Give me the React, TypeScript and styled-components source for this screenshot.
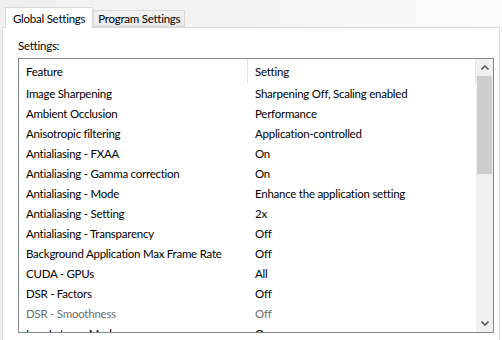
import React from "react";
import styled, { createGlobalStyle } from "styled-components";

const Global = createGlobalStyle`
  html, body { margin: 0; padding: 0; background: #ffffff; }
  body {
    font-family: "Segoe UI", Lato, "Noto Sans", sans-serif;
    font-size: 11.5px;
    letter-spacing: -0.25px;
    color: #000;
  }
  * { box-sizing: border-box; }
`;

const Window = styled.div`
  width: 502px;
  height: 340px;
  overflow: hidden;
  padding: 0 2px;
  background: linear-gradient(to right, #f0f0f0 0%, #f3f3f3 50%, #fcfcfc 100%);
`;

const TabStrip = styled.div`
  display: flex;
  align-items: flex-end;
  height: 27px;
  padding-left: 3px;
`;

const Tab = styled.div<{ $active?: boolean }>`
  position: relative;
  z-index: ${(p) => (p.$active ? 1 : 0)};
  height: ${(p) => (p.$active ? "21px" : "17px")};
  margin-bottom: ${(p) => (p.$active ? "-1px" : "0")};
  padding: ${(p) => (p.$active ? "0 7px" : "0 4px")};
  border: 1px solid #d9d9d9;
  border-bottom: ${(p) => (p.$active ? "none" : "1px solid #d9d9d9")};
  background: ${(p) => (p.$active ? "#ffffff" : "linear-gradient(#f2f2f2, #ebebeb)")};
  display: flex;
  align-items: center;
  line-height: 15px;
  white-space: nowrap;
`;

const Panel = styled.div`
  background: #ffffff;
  border: 1px solid #d9d9d9;
  height: 330px;
  padding: 10px 0 0 15px;
`;

const Label = styled.div`
  line-height: 15px;
  height: 15px;
  margin-bottom: 5px;
`;

const ListBox = styled.div`
  width: 476px;
  height: 275px;
  border: 1px solid #828790;
  display: flex;
  background: #ffffff;
`;

const ListMain = styled.div`
  flex: 1;
  overflow: hidden;
  display: flex;
  flex-direction: column;
`;

const Header = styled.div`
  display: grid;
  grid-template-columns: 229px 228px;
  height: 24px;
  flex: none;
`;

const HeaderCell = styled.div`
  display: flex;
  align-items: center;
  padding-left: 7px;
  border-right: 1px solid #e5e5e5;
  line-height: 15px;
`;

const Row = styled.div<{ $disabled?: boolean }>`
  display: grid;
  grid-template-columns: 229px 228px;
  height: 20px;
  flex: none;
  color: ${(p) => (p.$disabled ? "#6d6d6d" : "#000000")};
`;

const Cell = styled.div`
  display: flex;
  align-items: center;
  padding-left: 7px;
  white-space: nowrap;
  line-height: 15px;
`;

const ScrollBar = styled.div`
  width: 17px;
  flex: none;
  background: #f0f0f0;
  display: flex;
  flex-direction: column;
`;

const ArrowButton = styled.div`
  height: 17px;
  flex: none;
  display: flex;
  align-items: center;
  justify-content: center;
`;

const Thumb = styled.div`
  height: 98px;
  margin: 0 1px;
  background: #cdcdcd;
  flex: none;
`;

const Track = styled.div`
  flex: 1;
`;

const rows: { f: string; s: string; d?: boolean }[] = [
  { f: "Image Sharpening", s: "Sharpening Off, Scaling enabled" },
  { f: "Ambient Occlusion", s: "Performance" },
  { f: "Anisotropic filtering", s: "Application-controlled" },
  { f: "Antialiasing - FXAA", s: "On" },
  { f: "Antialiasing - Gamma correction", s: "On" },
  { f: "Antialiasing - Mode", s: "Enhance the application setting" },
  { f: "Antialiasing - Setting", s: "2x" },
  { f: "Antialiasing - Transparency", s: "Off" },
  { f: "Background Application Max Frame Rate", s: "Off" },
  { f: "CUDA - GPUs", s: "All" },
  { f: "DSR - Factors", s: "Off" },
  { f: "DSR - Smoothness", s: "Off", d: true },
  { f: "Low Latency Mode", s: "On" },
];

const Chevron = ({ up }: { up?: boolean }) => (
  <svg width="8" height="5" viewBox="0 0 8 5">
    <path
      d={up ? "M0.5 4.5 L4 1 L7.5 4.5" : "M0.5 0.5 L4 4 L7.5 0.5"}
      fill="none"
      stroke="#606060"
      strokeWidth="1.6"
    />
  </svg>
);

export default function App() {
  return (
    <>
      <Global />
      <Window>
        <TabStrip>
          <Tab $active>Global Settings</Tab>
          <Tab>Program Settings</Tab>
        </TabStrip>
        <Panel>
          <Label>Settings:</Label>
          <ListBox>
            <ListMain>
              <Header>
                <HeaderCell>Feature</HeaderCell>
                <HeaderCell>Setting</HeaderCell>
              </Header>
              {rows.map((r) => (
                <Row key={r.f} $disabled={r.d}>
                  <Cell>{r.f}</Cell>
                  <Cell>{r.s}</Cell>
                </Row>
              ))}
            </ListMain>
            <ScrollBar>
              <ArrowButton>
                <Chevron up />
              </ArrowButton>
              <Thumb />
              <Track />
              <ArrowButton>
                <Chevron />
              </ArrowButton>
            </ScrollBar>
          </ListBox>
        </Panel>
      </Window>
    </>
  );
}
